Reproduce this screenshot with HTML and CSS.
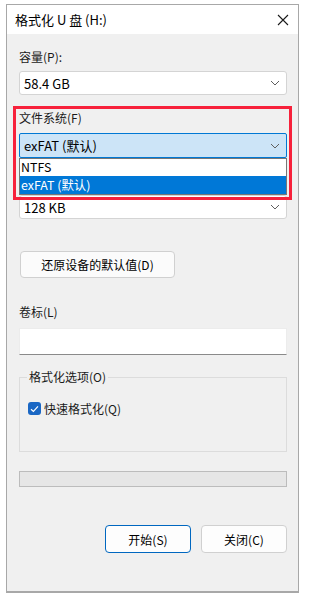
FILE: index.html
```html
<!DOCTYPE html>
<html lang="zh-CN">
<head>
<meta charset="utf-8">
<title>格式化 U 盘 (H:)</title>
<link rel="stylesheet" href="styles.css">
</head>
<body>
<div class="window">
  <div class="titlebar">
    <span class="title">格式化 U 盘 (H:)</span>
    <svg class="close" width="12" height="12" viewBox="0 0 12 12"><path d="M1 1 L11 11 M11 1 L1 11" stroke="#1a1a1a" stroke-width="1.1" fill="none"/></svg>
  </div>
  <div class="content">
    <div class="label first">容量(P):</div>
    <div class="select">
      <span>58.4 GB</span>
      <svg class="chev" width="10" height="6" viewBox="0 0 10 6"><path d="M1 1 L5 5 L9 1" stroke="#5f5f5f" stroke-width="1" fill="none"/></svg>
    </div>
    <div class="label">文件系统(F)</div>
    <div class="select focused">
      <span>exFAT (默认)</span>
      <svg class="chev" width="10" height="6" viewBox="0 0 10 6"><path d="M1 1 L5 5 L9 1" stroke="#5f5f5f" stroke-width="1" fill="none"/></svg>
    </div>
    <div class="label covered">分配单元大小(A)</div>
    <div class="select">
      <span>128 KB</span>
      <svg class="chev" width="10" height="6" viewBox="0 0 10 6"><path d="M1 1 L5 5 L9 1" stroke="#5f5f5f" stroke-width="1" fill="none"/></svg>
    </div>
    <div class="btn restore">还原设备的默认值(D)</div>
    <div class="label vol">卷标(L)</div>
    <div class="input"></div>
    <div class="group">
      <span class="legend">格式化选项(O)</span>
      <div class="check-row">
        <span class="checkbox"><svg width="9" height="8" viewBox="0 0 9 8"><path d="M1 4.2 L3.4 6.4 L8 1.4" stroke="#fff" stroke-width="1.2" fill="none"/></svg></span>
        <span>快速格式化(Q)</span>
      </div>
    </div>
    <div class="progress"></div>
    <div class="actions">
      <div class="btn primary">开始(S)</div>
      <div class="btn">关闭(C)</div>
    </div>
  </div>
  <div class="dropdown">
    <div class="opt">NTFS</div>
    <div class="opt sel">exFAT (默认)</div>
  </div>
  <div class="highlight"></div>
</div>
</body>
</html>
```
FILE: styles.css
```css
* { box-sizing: border-box; }
html, body { margin: 0; padding: 0; background: #fff; }
body {
  font-family: "Noto Sans CJK SC", "Noto Sans", sans-serif;
  font-size: 12px;
  color: #1a1a1a;
  width: 316px;
  height: 602px;
  overflow: hidden;
}
.window {
  position: relative;
  margin: 4px 0 0 6px;
  width: 293px;
  height: 589px;
  border: 1px solid #a8a8a8;
  border-bottom-width: 2px;
  display: flex;
  flex-direction: column;
  background: #f0f0f0;
}
.titlebar {
  height: 29px;
  background: #fff;
  display: flex;
  align-items: center;
  justify-content: space-between;
  padding: 0 9px 0 8px;
}
.title { font-size: 13px; color: #000; line-height: 16px; }
.close { display: block; }
.content {
  flex: 1;
  display: flex;
  flex-direction: column;
  padding: 0 11px 0 12px;
}
.label { height: 16px; line-height: 16px; margin-top: 15px; color: #1a1a1a; }
.label.first { margin-top: 15px; }
.label.covered { visibility: hidden; }
.select {
  margin-top: 6px;
  height: 24px;
  background: #fff;
  border: 1px solid #d4d4d4;
  border-radius: 3px;
  display: flex;
  align-items: center;
  justify-content: space-between;
  padding: 0 6px 0 4px;
  font-size: 13px;
  color: #000;
}
.select.focused {
  margin-top: 7px;
  height: 25px;
  background: #cce4f7;
  border-color: #0078d4;
  border-radius: 2px;
}
.chev { display: block; }
.btn {
  height: 28px;
  border: 1px solid #d0d0d0;
  border-radius: 4px;
  background: #fdfdfd;
  display: flex;
  align-items: center;
  justify-content: center;
  color: #000;
  width: 86px;
}
.btn.restore {
  margin-top: 32px;
  margin-left: 1px;
  width: 155px;
  height: 27px;
  background: #fbfbfb;
}
.label.vol { margin-top: 26px; }
.input {
  margin-top: 8px;
  height: 27px;
  background: #fff;
  border: 1px solid #ececec;
  border-bottom-color: #8a8a8a;
}
.group {
  position: relative;
  margin-top: 22px;
  height: 75px;
  border: 1px solid #dcdcdc;
  padding: 24px 0 0 8px;
}
.legend {
  position: absolute;
  top: -9px;
  left: 7px;
  padding: 0 2px;
  background: #f0f0f0;
  line-height: 16px;
}
.check-row { display: flex; align-items: center; gap: 3px; line-height: 13px; }
.checkbox {
  width: 13px;
  height: 13px;
  border-radius: 3px;
  background: #1a67c4;
  display: flex;
  align-items: center;
  justify-content: center;
}
.checkbox svg { display: block; }
.progress {
  margin-top: 19px;
  height: 16px;
  background: #e6e6e6;
  border: 1px solid #bcbcbc;
}
.actions {
  margin-top: 38px;
  display: flex;
  justify-content: flex-end;
  gap: 10px;
}
.btn.primary { border-color: #0067c0; }
.dropdown {
  position: absolute;
  left: 12px;
  top: 153px;
  width: 268px;
  height: 37px;
  border: 1px solid #767676;
  background: #fff;
  font-size: 12.4px;
  color: #000;
}
.opt { height: 17px; line-height: 17px; padding-left: 1px; }
.opt.sel { background: #0078d7; color: #fff; height: 18px; line-height: 18px; }
.highlight {
  position: absolute;
  left: 6px;
  top: 101px;
  width: 279px;
  height: 94px;
  border: 3px solid #f7213b;
}
```
